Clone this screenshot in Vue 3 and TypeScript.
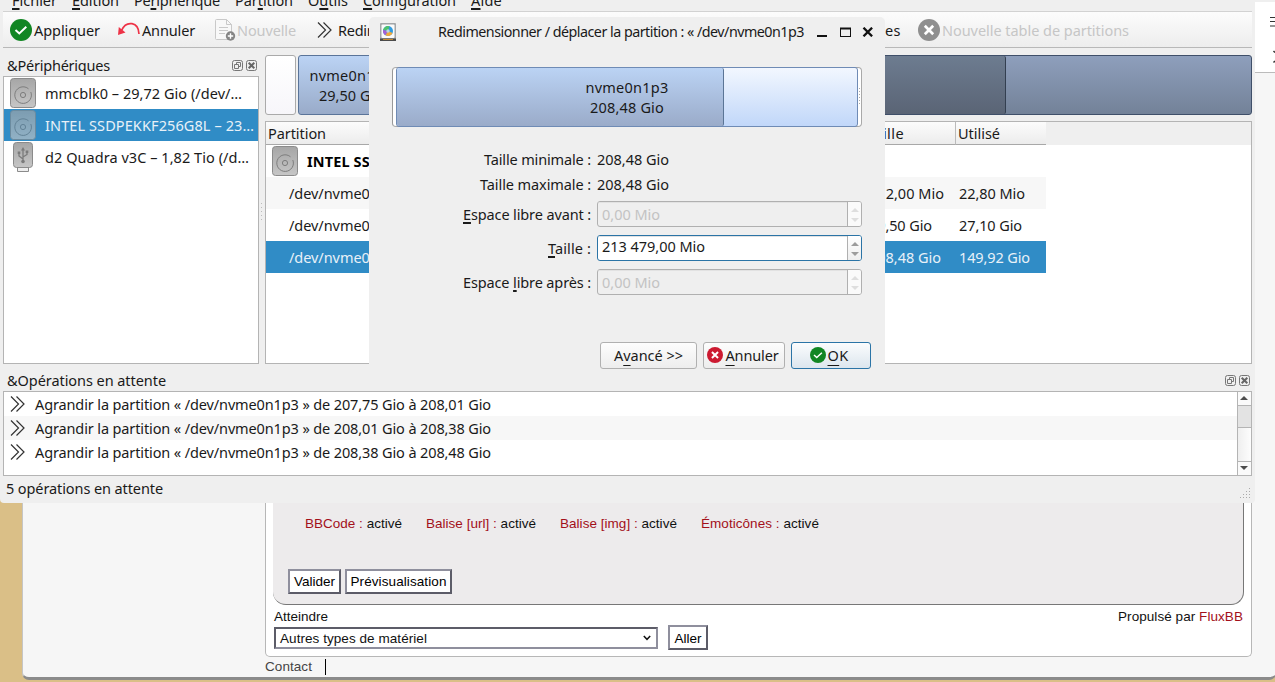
<script setup lang="ts">
import type { Directive } from 'vue'

/* Tracks a label so that it occupies the given advance width. */
const vFit: Directive<HTMLElement, number> = {
  mounted(el, { value }) {
    const natural = el.getBoundingClientRect().width
    const count = (el.textContent ?? '').length
    if (count > 0) el.style.letterSpacing = `${(value - natural) / count}px`
  },
}

interface Mnemonic { pre: string; key: string; post: string; w: number }

const menu: Mnemonic[] = [
  { pre: '', key: 'F', post: 'ichier', w: 45 },
  { pre: '', key: 'É', post: 'dition', w: 47 },
  { pre: 'Pé', key: 'r', post: 'iphérique', w: 86 },
  { pre: 'Par', key: 't', post: 'ition', w: 58 },
  { pre: 'O', key: 'u', post: 'tils', w: 40 },
  { pre: '', key: 'C', post: 'onfiguration', w: 93 },
  { pre: '', key: 'A', post: 'ide', w: 31 },
]

const devices = [
  { name: 'mmcblk0 – 29,72 Gio (/dev/…', w: 197, kind: 'disk', selected: false },
  { name: 'INTEL SSDPEKKF256G8L – 23…', w: 209, kind: 'disk', selected: true },
  { name: 'd2 Quadra v3C – 1,82 Tio (/d…', w: 204, kind: 'usb', selected: false },
]

const partitions = [
  { name: '/dev/nvme0n1p1', size: '512,00 Mio', sw: 75, used: '22,80 Mio', uw: 66, selected: false },
  { name: '/dev/nvme0n1p2', size: '29,50 Gio', sw: 63, used: '27,10 Gio', uw: 63, selected: false },
  { name: '/dev/nvme0n1p3', size: '208,48 Gio', sw: 72, used: '149,92 Gio', uw: 71, selected: true },
]

const operations = [
  'Agrandir la partition « /dev/nvme0n1p3 » de 207,75 Gio à 208,01 Gio',
  'Agrandir la partition « /dev/nvme0n1p3 » de 208,01 Gio à 208,38 Gio',
  'Agrandir la partition « /dev/nvme0n1p3 » de 208,38 Gio à 208,48 Gio',
]

const limits = [
  { label: 'Taille minimale :', w: 107, value: '208,48 Gio' },
  { label: 'Taille maximale :', w: 111, value: '208,48 Gio' },
]

const spins = [
  { pre: '', key: 'E', post: 'space libre avant :', w: 128, value: '0,00 Mio', vw: 58, active: false },
  { pre: '', key: 'T', post: 'aille :', w: 43, value: '213 479,00 Mio', vw: 103, active: true },
  { pre: 'Espace ', key: 'l', post: 'ibre après :', w: 128, value: '0,00 Mio', vw: 58, active: false },
]

const features = [
  { label: 'BBCode :', w: 97 },
  { label: 'Balise [url] :', w: 110 },
  { label: 'Balise [img] :', w: 117 },
  { label: 'Émoticônes :', w: 118 },
]

const grip = [[9, 0], [6, 3], [9, 3], [3, 6], [6, 6], [9, 6], [0, 9], [3, 9], [6, 9], [9, 9]]
</script>

<template>
  <div class="desktop">
    <svg class="defs" width="0" height="0">
      <defs>
        <linearGradient id="metal" x1="0" y1="0" x2="0" y2="1">
          <stop offset="0" stop-color="#a6a6a6" />
          <stop offset="1" stop-color="#c6c6c6" />
        </linearGradient>
        <symbol id="disk" viewBox="0 0 26 30">
          <rect x=".5" y=".5" width="25" height="29" rx="3" fill="url(#metal)" stroke="#8b8b8b" />
          <path d="M18.500 10.800A8.300 8.300 0 1 0 20.800 14" fill="none" stroke="#7d7d7d" stroke-width="1" />
          <circle cx="13" cy="17" r="2.600" fill="none" stroke="#7d7d7d" />
        </symbol>
        <symbol id="usb" viewBox="0 0 26 30">
          <path d="M7.500 25.500v4h11v-4" fill="#eee" stroke="#8b8b8b" />
          <rect x="3.500" y=".5" width="19" height="25" rx="3" fill="url(#metal)" stroke="#8b8b8b" />
          <path d="M13 20V7M13 17l-4-3v-3M13 15l4-2.500V10" fill="none" stroke="#7b7b7b" stroke-width="1.300" />
          <path d="M13 5l-2 3.500h4zM7.700 9.500h2.600v2.600H7.700zM15.700 8.500h2.600v2.600h-2.600z" fill="#7b7b7b" />
          <circle cx="13" cy="19.500" r="1.800" fill="#7b7b7b" />
        </symbol>
        <symbol id="check" viewBox="0 0 22 22">
          <circle cx="11" cy="11" r="11" fill="#118623" />
          <path d="M5.500 11l3.800 3.500 7-6.700" fill="none" stroke="#fff" stroke-width="2" />
        </symbol>
        <symbol id="cross" viewBox="0 0 22 22">
          <circle cx="11" cy="11" r="11" />
          <path d="M6.800 6.800l8.400 8.400M15.200 6.800l-8.400 8.400" stroke="#fff" stroke-width="2.700" />
        </symbol>
        <symbol id="chevrons" viewBox="0 0 16 16">
          <path d="M1 .5l7.500 7.500L1 15.500M6.500 .5L14 8l-7.500 7.500" fill="none" stroke="#333" stroke-width="1.200" />
        </symbol>
        <symbol id="float" viewBox="0 0 11 11">
          <rect x=".5" y=".5" width="10" height="10" rx="2" fill="none" stroke="#777" />
          <path d="M4.500 4.500v-2h4v4h-2M2.500 4.500h4v4h-4z" fill="none" stroke="#777" />
        </symbol>
        <symbol id="close" viewBox="0 0 11 11">
          <rect x=".5" y=".5" width="10" height="10" rx="2" fill="none" stroke="#777" />
          <path d="M2.700 2.700l5.600 5.600M8.300 2.700L2.700 8.300" stroke="#666" stroke-width="2" />
        </symbol>
      </defs>
    </svg>

    <!-- Forum page behind the partition manager -->
    <main class="page">
      <section class="forum">
        <div class="post-form">
          <div class="features">
            <span v-for="f in features" :key="f.label" v-fit="f.w" class="fit"><a>{{ f.label }}</a> activé</span>
          </div>
          <div class="form-buttons">
            <button class="classic valider"><span v-fit="41" class="fit">Valider</span></button>
            <button class="classic preview"><span v-fit="96" class="fit">Prévisualisation</span></button>
          </div>
        </div>
        <div class="jump-head">
          <span v-fit="54" class="fit">Atteindre</span>
          <span v-fit="125" class="fit">Propulsé par <a>FluxBB</a></span>
        </div>
        <div class="jump">
          <div class="select">
            <span v-fit="147" class="fit">Autres types de matériel</span>
            <svg width="8" height="6" viewBox="0 0 8 6"><path d="M.8 1L4 4.300 7.200 1" fill="none" stroke="#111" stroke-width="1.500" /></svg>
          </div>
          <button class="classic aller"><span v-fit="27" class="fit">Aller</span></button>
        </div>
      </section>
      <footer class="contact"><span v-fit="47" class="fit">Contact</span><i></i></footer>
    </main>

    <div class="browser-corner">
      <svg width="5" height="60" viewBox="0 0 5 60">
        <path d="M0 3.500h5M0 7.500h5M0 12h5" stroke="#333" stroke-width="1.200" />
        <path d="M3.500 37l1.500 1.500M3.500 48.500l1.500-1.500" stroke="#333" stroke-width="1.500" />
      </svg>
    </div>

    <!-- Partition manager -->
    <div class="window">
      <nav class="menu">
        <span v-for="m in menu" :key="m.post" v-fit="m.w" class="fit">{{ m.pre }}<u>{{ m.key }}</u>{{ m.post }}</span>
      </nav>
      <div class="toolbar">
        <div class="tools">
          <svg class="i22"><use href="#check" /></svg><span v-fit="66" class="fit tl">Appliquer</span>
          <svg class="undo" width="22" height="14" viewBox="0 0 22 14">
            <path d="M3.500 8.500C6 3 10 1 14 1.700 18.500 2.500 20.800 6.500 21 12" fill="none" stroke="#ee3347" stroke-width="1.700" />
            <path d="M0 13L.8 5 7.500 10.500z" fill="#ee3347" />
          </svg><span v-fit="53" class="fit tl">Annuler</span>
          <svg class="doc" width="21" height="22" viewBox="0 0 21 22">
            <path d="M.5 1.500a1 1 0 0 1 1-1h10l5 5v14a1 1 0 0 1-1 1h-14a1 1 0 0 1-1-1zM11.500 .5v5h5" fill="#f8f8f8" stroke="#c9c9c9" />
            <path d="M4 8.500h9M4 11.500h9M4 14.500h6" stroke="#c9c9c9" />
            <circle cx="15.500" cy="17" r="4.700" fill="#858585" />
            <path d="M12.800 17h5.400M15.500 14.300v5.400" stroke="#fff" stroke-width="1.400" />
          </svg><span v-fit="59" class="fit tl off">Nouvelle</span>
          <svg class="chev" width="16" height="16"><use href="#chevrons" /></svg><span v-fit="172" class="fit tl">Redimensionner/Déplacer</span>
        </div>
        <div class="tools">
          <span v-fit="71" class="fit">Propriétés</span><span v-fit="16" class="fit es">es</span>
          <svg class="i22 grey"><use href="#cross" /></svg><span v-fit="187" class="fit tl off">Nouvelle table de partitions</span>
        </div>
      </div>

      <div class="workspace">
        <aside class="dock">
          <header class="dock-title">
            <span v-fit="103" class="fit">&amp;Périphériques</span>
            <span class="dock-icons"><svg><use href="#float" /></svg><svg><use href="#close" /></svg></span>
          </header>
          <div class="box devices">
            <div v-for="d in devices" :key="d.name" class="device" :class="{ selected: d.selected }">
              <svg class="drive"><use :href="'#' + d.kind" /></svg>
              <span v-fit="d.w" class="fit">{{ d.name }}</span>
            </div>
          </div>
        </aside>
        <div class="splitter"></div>
        <section class="content">
          <div class="disk-map">
            <div class="part empty"></div>
            <div class="part used"><span v-fit="83" class="fit">nvme0n1p2</span><span v-fit="64" class="fit">29,50 Gio</span></div>
            <div class="part current"><div class="filled"></div></div>
          </div>
          <div class="box table">
            <div class="thead">
              <div class="th first"><span v-fit="58" class="fit">Partition</span></div>
              <div class="th size"><span v-fit="37" class="fit">Taille</span></div>
              <div class="th last"><span v-fit="42" class="fit">Utilisé</span></div>
            </div>
            <div class="tr root"><svg class="drive"><use href="#disk" /></svg><b v-fit="171" class="fit">INTEL SSDPEKKF256G8L</b></div>
            <div v-for="p in partitions" :key="p.name" class="tr" :class="{ selected: p.selected }">
              <div class="td name"><span v-fit="115" class="fit">{{ p.name }}</span></div>
              <div class="td size"><span v-fit="p.sw" class="fit">{{ p.size }}</span></div>
              <div class="td"><span v-fit="p.uw" class="fit">{{ p.used }}</span></div>
            </div>
          </div>
        </section>
      </div>

      <header class="dock-title ops-title">
        <span v-fit="159" class="fit">&amp;Opérations en attente</span>
        <span class="dock-icons"><svg><use href="#float" /></svg><svg><use href="#close" /></svg></span>
      </header>
      <div class="box operations">
        <div class="op-list">
          <div v-for="o in operations" :key="o" class="op">
            <svg width="16" height="16"><use href="#chevrons" /></svg>
            <span v-fit="456" class="fit">{{ o }}</span>
          </div>
        </div>
        <div class="scrollbar">
          <div class="sb-btn"><svg width="8" height="4"><path d="M0 4L4 0l4 4z" fill="#4c4c4c" /></svg></div>
          <div class="thumb"></div>
          <div class="track"></div>
          <div class="sb-btn down"><svg width="8" height="4"><path d="M0 0l4 4 4-4z" fill="#4c4c4c" /></svg></div>
        </div>
      </div>
      <footer class="status">
        <span v-fit="157" class="fit">5 opérations en attente</span>
        <svg width="10" height="10"><rect v-for="[x, y] in grip" :key="x + '-' + y" :x="x" :y="y" width="1" height="1" fill="#aaa" /></svg>
      </footer>
    </div>

    <!-- Resize dialog -->
    <div class="dialog">
      <header class="titlebar">
        <svg width="16" height="18" viewBox="0 0 16 18">
          <rect width="16" height="18" rx="1" fill="#a3a6a8" /><rect x="1.500" y="1.500" width="13" height="13.500" rx="1" fill="#fafafa" />
          <rect y="15.500" width="16" height="2.500" fill="#4a4a4a" /><path d="M3 16.500h10" stroke="#c68a32" />
          <circle cx="8" cy="8" r="5" fill="#2f9be0" />
          <path d="M8 8l1.500-4.800A5 5 0 0 0 3.100 7z" fill="#4fc26a" />
          <path d="M8 8L3.100 7A5 5 0 0 0 5.500 12.300z" fill="#a45fd6" />
          <path d="M8 8l-2.500 4.300A5 5 0 0 0 12.600 10z" fill="#f0a93a" />
          <circle cx="8" cy="8" r="1.700" fill="#b9d3e4" />
        </svg>
        <span v-fit="366" class="fit caption">Redimensionner / déplacer la partition : « /dev/nvme0n1p3</span>
        <svg class="winbtns" width="56" height="10" viewBox="0 0 56 10">
          <path d="M0 9h10" stroke="#111" stroke-width="2" />
          <path d="M23 1.500h11M23.500 1v8.500M33.500 1v8.500M23 9.500h11" stroke="#111" fill="none" /><path d="M23 1.500h11" stroke="#111" stroke-width="2" />
          <path d="M46.500 .7l8.600 8.600M55.100 .7l-8.600 8.600" stroke="#111" stroke-width="2.300" />
        </svg>
      </header>
      <div class="resizer">
        <div class="resized">
          <div class="fill"></div>
          <span v-fit="83" class="fit">nvme0n1p3</span>
          <span v-fit="74" class="fit">208,48 Gio</span>
        </div>
        <i class="handle"></i>
      </div>
      <div class="form">
        <div v-for="l in limits" :key="l.label" class="row limit">
          <div class="label"><span v-fit="l.w" class="fit">{{ l.label }}</span></div>
          <span v-fit="72" class="fit">{{ l.value }}</span>
        </div>
        <div v-for="s in spins" :key="s.post" class="row spin-row">
          <div class="label"><span v-fit="s.w" class="fit">{{ s.pre }}<u>{{ s.key }}</u>{{ s.post }}</span></div>
          <div class="spin" :class="{ active: s.active }">
            <div class="field"><span v-fit="s.vw" class="fit">{{ s.value }}</span></div>
            <div class="arrows">
              <svg width="8" height="14" viewBox="0 0 8 14"><path d="M0 4L4 0l4 4zM0 10l4 4 4-4z" /></svg>
            </div>
          </div>
        </div>
      </div>
      <div class="actions">
        <div class="btn advanced"><span v-fit="69" class="fit">A<u>v</u>ancé &gt;&gt;</span></div>
        <div class="btn cancel"><svg class="i16"><use href="#cross" /></svg><span v-fit="53" class="fit"><u>A</u>nnuler</span></div>
        <div class="btn ok"><svg class="i16"><use href="#check" /></svg><span v-fit="21" class="fit"><u>O</u>K</span></div>
      </div>
    </div>
  </div>
</template>

<style>
body { overflow: hidden; }
</style>

<style scoped>
.desktop, .desktop * { box-sizing: border-box; }
.desktop { position: relative; width: 1275px; height: 682px; overflow: hidden; background: #dabf87; font: 14.500px/20px "Noto Sans", sans-serif; color: #1a1a1a; }
.defs { position: absolute; }
.fit { display: inline-block; white-space: pre; flex: none; }
svg { flex: none; display: block; }
u { text-decoration: underline; text-decoration-thickness: 1.500px; text-underline-offset: 2px; text-decoration-skip-ink: none; }

/* forum page */
.page { position: absolute; left: 22px; top: 0; width: 1254px; height: 680px; background: #f6f6f6; border-left: 1px solid #c5c5c5; border-bottom: 3px solid #8b8b8b; border-radius: 0 0 7px 7px; font: 13.500px/16px "Liberation Sans", Arial, sans-serif; color: #111; }
.page a { color: #a3101a; }
.forum { margin-left: 242px; width: 987px; height: 657px; padding: 0 7px; background: #fff; border: 1px solid #b7b7b7; border-radius: 0 0 5px 5px; border-top: 0; }
.post-form { width: 971px; height: 605px; padding-top: 516px; background: #edebec; border-right: 1px solid #777; border-bottom: 1px solid #777; border-radius: 0 0 13px 13px; }
.features { display: flex; gap: 24px; padding-left: 32px; }
.form-buttons { display: flex; gap: 4px; padding: 37px 0 0 15px; }
.classic { height: 25px; padding: 0; background: #fff; border: 2px solid; border-color: #8f8f9d #5c5c68 #5c5c68 #8f8f9d; border-radius: 0; font: 13.500px "Liberation Sans", Arial, sans-serif; color: #000; }
.valider { width: 53px; }
.preview { width: 107px; }
.aller { width: 40px; }
.aller .fit { padding-top: 2px; }
.jump-head { display: flex; justify-content: space-between; padding: 4px 1px 0 1px; }
.jump { display: flex; align-items: center; gap: 10px; padding-left: 1px; }
.select { display: flex; align-items: center; justify-content: space-between; width: 384px; height: 22px; padding: 0 5px 0 4px; border: 2px solid; border-color: #5c5c68 #8f8f9d #8f8f9d #5c5c68; }
.select .fit { padding-top: 2px; }
.contact { display: flex; align-items: center; gap: 13px; height: 19px; margin-left: 242px; color: #444; }
.contact i { width: 1px; height: 16px; background: #000; }

.browser-corner { position: absolute; left: 1255px; top: 0; width: 20px; height: 73px; padding: 12px 0 0 15px; background: #fff; border-top: 2px solid #efefef; border-bottom: 1px solid #bbb; }

/* main window */
.window { position: absolute; left: 0; top: 0; width: 1255px; height: 503px; background: #efefef; border-radius: 0 0 4px 4px; }
.menu { display: flex; gap: 15px; height: 11px; padding-left: 12px; overflow: hidden; }
.menu .fit { margin-top: -10px; }
.menu u { text-decoration-thickness: 2px; text-underline-offset: 1.500px; }
.toolbar { display: flex; justify-content: space-between; height: 37px; margin: 0 3px; padding: 0 123px 0 7px; background: linear-gradient(#fcfcfc, #ededed); border-top: 1px solid #d2d2d2; border-bottom: 1px solid #b8b8b8; }
.tools { display: flex; align-items: center; }
.tl { margin-left: 2px; }
.off { color: #c6c6c6; }
.i22 { width: 22px; height: 22px; margin-top: 0; }
.i16 { width: 16px; height: 16px; margin-right: 2px; }
.grey { margin-left: 17px; fill: #8f8f8f; }
.es { margin-left: 4px; }
.undo { margin: -2px 0 0 18px; }
.doc { margin-left: 20px; margin-right: -1px; }
.chev { margin: 0 3px 0 21px; }
.workspace { display: flex; height: 316px; padding: 0 3px; }
.dock { width: 256px; padding-top: 7px; }
.dock-title { display: flex; align-items: center; justify-content: space-between; height: 21px; padding: 0 2px 0 4px; }
.dock-title .fit { margin-top: -2px; }
.dock-icons { display: flex; gap: 3px; }
.dock-icons svg { width: 11px; height: 11px; }
.box { background: #fff; border: 1px solid #b4b4b4; }
.devices { height: 288px; }
.device { display: flex; align-items: center; height: 32px; padding-left: 6px; gap: 9px; }
.drive { width: 26px; height: 30px; }
.selected { background: #308cc6; color: #e8f1f8; }
.device.selected .drive { opacity: .65; }
.splitter { width: 6px; margin-top: 155px; height: 17px; background: repeating-linear-gradient(#bbb 0 1px, transparent 1px 4px) 2px 0 / 1px 100% no-repeat; }
.content { width: 987px; padding-top: 7px; }
.disk-map { display: flex; gap: 2px; height: 60px; }
.part { border-radius: 3px; border: 1px solid #526c91; }
.empty { width: 31px; background: linear-gradient(#fff, #f7f6fa); border-color: #aaa; }
.used { display: flex; flex-direction: column; align-items: center; padding-top: 9px; width: 106px; background: linear-gradient(#bbd3f4, #99abc9); border-color: #5a7499; }
.current { flex: 1; background: linear-gradient(#8e9fbc, #738298); border-color: #3f4f69; }
.filled { width: 599px; height: 58px; background: linear-gradient(#6d7c90, #5a6475); border-right: 1px solid #333f50; border-radius: 2px; }
.table { height: 243px; margin-top: 6px; background: #fff; }
.thead { display: flex; height: 23px; background: #efefef; }
.th { height: 23px; padding: 1px 2px; background: linear-gradient(#fcfcfc, #ececec); border-bottom: 1px solid #a8a8a8; }
.th.first { width: 599px; }
.th.size { width: 91px; border-right: 1px solid #bbb; }
.th.last { width: 90px; }
.tr { display: flex; align-items: center; width: 780px; height: 32px; }
.tr:nth-child(odd) { background: #f7f7f7; }
.tr.selected { background: #308cc6; }
.root { padding-left: 6px; gap: 9px; color: #000; }
.td.name { width: 603px; padding-left: 23px; }
.td.size { width: 90px; }
.ops-title { height: 21px; margin: 6px 3px 0 3px; padding-right: 2px; }
.operations { display: flex; width: 1249px; height: 85px; margin-left: 3px; }
.op-list { flex: 1; }
.op { display: flex; align-items: center; gap: 9px; height: 24px; padding: 0 0 0 6px; }
.op .fit { margin-top: -1px; }
.op svg { margin-top: 0; }
.op:nth-child(even) { background: #f7f7f7; }
.scrollbar { display: flex; flex-direction: column; width: 14px; border-left: 1px solid #b4b4b4; background: #fafafa; }
.sb-btn { display: flex; align-items: center; justify-content: center; height: 13px; padding: 0 1px 1px 0; }
.sb-btn.down { border-top: 1px solid #b4b4b4; height: 14px; }
.thumb { height: 23px; background: #e3e3e3; border: solid #b4b4b4; border-width: 1px 0; }
.track { flex: 1; background: linear-gradient(90deg, #efefef, #fdfdfd); }
.status { display: flex; justify-content: space-between; align-items: flex-start; padding: 2px 5px 0 6px; }
.status svg { margin-top: 10px; }

/* dialog */
.dialog { position: absolute; left: 369px; top: 17px; width: 516px; height: 358px; background: #efefef; border-radius: 5px 5px 0 0; }
.titlebar { display: flex; align-items: center; height: 30px; padding-left: 11px; }
.caption { margin-left: 42px; font-size: 14.300px; }
.winbtns { margin-left: 13px; }
.resizer { display: flex; align-items: center; width: 470px; height: 60px; margin: 20px 0 0 23px; padding-left: 3px; background: #fff; border: 1px solid #a9a9a9; border-left-color: #999; border-radius: 4px; }
.resized { position: relative; display: flex; flex-direction: column; align-items: center; width: 462px; height: 60px; margin: -1px 0; padding-top: 9px; background: linear-gradient(#f2f7ff, #c1d7f9); border: 1px solid #6f8bb5; border-radius: 3px; }
.fill { position: absolute; left: 0; top: 0; width: 327px; height: 58px; background: linear-gradient(#bbd3f4, #9aabc9); border-right: 1px solid #5b7596; border-radius: 2px; }
.resized .fit { position: relative; }
.handle { width: 1px; height: 18px; margin-left: 1px; background: repeating-linear-gradient(#aaa 0 1px, #fff 1px 3px); }
.form { padding-top: 20px; }
.row { display: flex; align-items: center; height: 25px; gap: 6px; }
.limit { padding-bottom: 2px; }
.label { width: 222px; text-align: right; }
.spin-row { height: 34px; }
.spin { display: flex; width: 265px; height: 26px; border: 1px solid #b0b0b0; border-radius: 3px; color: #c3c3c3; background: #efefef; overflow: hidden; }
.field { flex: 1; padding: 2px 0 0 4px; box-shadow: inset 0 1px #e2e2e2; }
.arrows { width: 14px; padding: 6px 0 0 3px; border-left: 1px solid #b0b0b0; background: #fafafa; fill: #dedede; }
.spin.active { border-color: #2b74a6; background: #fff; color: #1a1a1a; }
.active .field { padding-top: 0; }
.active .arrows { fill: #9c9c9c; background: linear-gradient(#fff, #eee); }
.actions { display: flex; gap: 6px; padding: 43px 0 0 231px; }
.btn { display: flex; align-items: center; justify-content: center; height: 27px; padding: 0 2px 2px 0; border: 1px solid #b0b0b0; border-radius: 3px; background: linear-gradient(#fdfdfd, #ededed); }
.btn u { text-decoration-thickness: 1px; text-underline-offset: 4px; }
.advanced { width: 97px; padding-right: 0; }
.cancel { width: 82px; }
.cancel svg { fill: #cc1a31; }
.ok { width: 80px; padding-right: 4px; border-color: #2b74a6; background: linear-gradient(#fbfcfd, #dce6ee); }
</style>
